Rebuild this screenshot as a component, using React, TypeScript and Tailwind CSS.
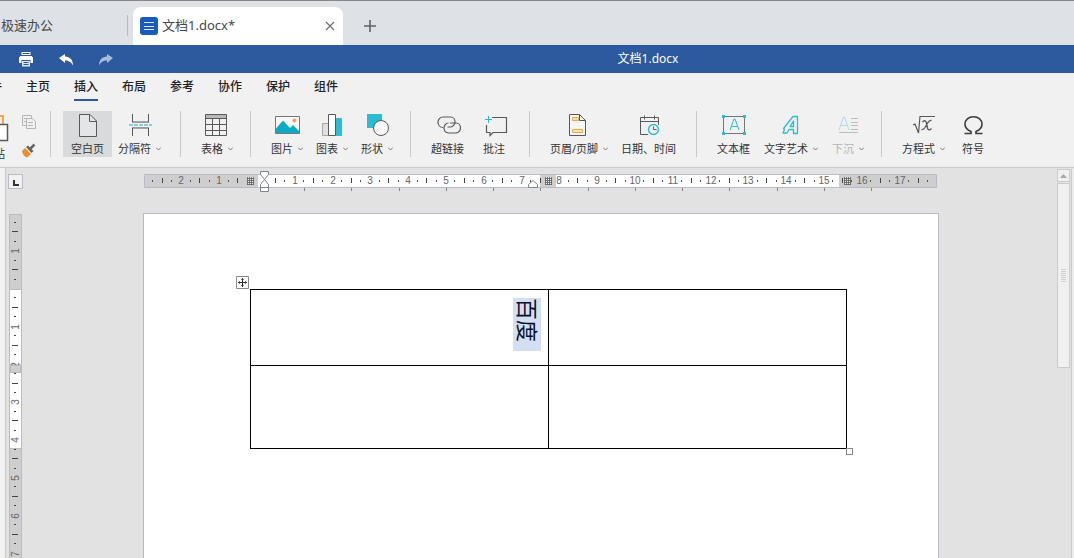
import React, { ReactNode } from 'react';
import clsx from 'clsx';

const CM = 37.8;
const INK = '#595959';
const CYAN = '#2bbdd4';
const ORANGE = '#f5a54a';

const Icon = ({ children }: { children: ReactNode }) => (
  <svg width="28" height="27" viewBox="0 0 28 27" fill="none" stroke={INK} className="shrink-0">
    {children}
  </svg>
);

const BlankPageIcon = () => (
  <Icon>
    <path d="M5.500 1.500H16l6.500 6.500V23.500h-17z" fill="#e4e5e6" />
    <path d="M15.500 1.500v7h7" />
  </Icon>
);

const BreakIcon = () => (
  <Icon>
    <path d="M6.500 1v8h16V1M6.500 23v-8h16v8" />
    <path d="M6 9.500h17M6 14.500h17" stroke="#9a9a9a" />
    <path d="M3 12h23" stroke="#7fd3de" strokeWidth="2" strokeDasharray="4 1" />
  </Icon>
);

const TableIcon = () => (
  <Icon>
    <path d="M3 2h21v4H3z" fill="#b9b9bb" stroke="none" />
    <path d="M2.500 1.500h21v21h-21zM2.500 5.500h21M2.500 11.500h21M2.500 17.500h21M9.500 5.500v17M16.500 5.500v17" />
  </Icon>
);

const PictureIcon = () => (
  <Icon>
    <path d="M2.500 3.500h24v17h-24z" fill="#f7f7f7" stroke="#777" />
    <path d="M3 15.500l7-8 7 7.500 3-3 6 6V20H3z" fill="#0aacc4" stroke="none" />
    <circle cx="21.500" cy="7.500" r="2" fill={ORANGE} stroke="none" />
  </Icon>
);

const ChartIcon = () => (
  <Icon>
    <path d="M4.500 10.500h6v12h-6z" fill="#e0e0e0" stroke="#a5a5a5" />
    <path d="M17.500 5.500h6v17h-6z" fill="#2bbdd4" stroke={CYAN} />
    <path d="M10.500 1.500h7v21h-7z" fill="#fff" />
  </Icon>
);

const ShapesIcon = () => (
  <Icon>
    <path d="M4 1h15v14H4z" fill="#2bbdd4" stroke="none" />
    <circle cx="18" cy="15" r="7.500" fill="#f7f7f7" />
  </Icon>
);

const LinkIcon = () => (
  <Icon>
    <g strokeWidth="1.200">
      <path d="M9 14.500C6 14.500 4 12 4 9.200 4 6.500 6 4 9 4h7.500c3 0 4.500 2.500 4.500 5s-2 5-4.500 5h-3" />
      <path d="M16 10h6c3 0 4.500 2.500 4.500 5s-2 5-4.500 5h-7.500C11.500 20 10 17.500 10 15s1.800-5 4.500-5" />
    </g>
  </Icon>
);

const CommentIcon = () => (
  <Icon>
    <path d="M12 4.500h14.500v15H13l-3 3v-3H6.500V12" strokeWidth="1.200" />
    <path d="M8.500 3v7M5 6.500h7" stroke={CYAN} />
  </Icon>
);

const HeaderIcon = () => (
  <Icon>
    <path d="M4.500 1.500h10l6 6v15h-16z" fill="#f7f7f7" />
    <path d="M14.500 1.500v6h6" />
    <path d="M7.500 4.500h6v3h-6zM7.500 16.500h10v3h-10z" fill="#ffe3ae" stroke={ORANGE} />
  </Icon>
);

const DateIcon = () => (
  <Icon>
    <path d="M13 21.500H5.500v-17h18V12M5.500 8.500h18M9.500 2.500v4M19.500 2.500v4" />
    <circle cx="18.500" cy="16.500" r="5" stroke={CYAN} strokeWidth="1.400" />
    <path d="M18.500 13.500v3h3" />
  </Icon>
);

const TextBoxIcon = () => (
  <Icon>
    <path d="M3.500 3.500h21v17h-21z" stroke="#777" />
    <path d="M10 17l4-11h1l4 11M11.500 13.500h6" stroke={CYAN} />
    <path d="M2 2h3v3H2zM23 2h3v3h-3zM2 19h3v3H2zM23 19h3v3h-3z" fill={CYAN} stroke="none" />
  </Icon>
);

const WordArtIcon = () => (
  <Icon>
    <path
      d="M16 3.500h4.500v17h-4v-4h-4.500L10 20H6l1.500-3.500-1-1zM16.500 8l-3.500 5.500h3.500z"
      stroke={CYAN}
      strokeWidth="1.300"
      strokeLinejoin="round"
    />
  </Icon>
);

const DropCapIcon = () => (
  <Icon>
    <path d="M5 17L9.500 4h1L15 17M6.500 12.500h7" stroke="#a5dfe8" />
    <path d="M17 5.500h7M17 9.500h7M17 12.500h7M17 16.500h7M5 19.500h19" stroke="#bdbdbd" />
  </Icon>
);

const EquationIcon = () => (
  <Icon>
    <path d="M3 12l2-1 3.500 9L10 3.500h15" strokeWidth="1.200" />
    <path
      d="M12.500 9c2-2 3.500-1.500 4 1l1 5c.5 2.500 2 2.500 4 .5M21.500 7.500c-2-.5-3 1-4.500 3.500l-2 3.500c-1 1.500-1.700 2.500-3.500 2"
      strokeWidth="1.300"
    />
  </Icon>
);

const OmegaIcon = () => (
  <Icon>
    <path
      d="M5.500 20.500h6.500v-2C8.500 17 6 14.500 6 11c0-4 3.500-7.300 8.500-7.300S23 7 23 11c0 3.500-2.500 6-6 7.500v2h6.500"
      stroke="#3c3c3c"
      strokeWidth="1.600"
    />
  </Icon>
);

const Chevron = () => (
  <svg width="5" height="4" viewBox="0 0 5 4" fill="none" stroke="#7a7a7a">
    <path d="M0 .500l2.500 2.500L5 .500" />
  </svg>
);

interface ToolProps {
  icon: ReactNode;
  label: string;
  menu?: boolean;
  active?: boolean;
  disabled?: boolean;
}

const Tool = ({ icon, label, menu, active, disabled }: ToolProps) => (
  <button
    disabled={disabled}
    className={clsx(
      'flex h-[46px] flex-col items-center pt-0.5',
      active ? 'bg-[#d8dadc] px-2' : 'px-1.5',
      disabled ? 'text-[#b5b5b5]' : 'text-[#333]',
    )}
  >
    {icon}
    <span className="flex items-center gap-[5px] text-[11px] leading-[18px] whitespace-nowrap">
      {label}
      {menu && <Chevron />}
    </span>
  </button>
);

const Group = ({ className, children }: { className: string; children: ReactNode }) => (
  <div className={clsx('flex h-[46px] shrink-0 border-l border-[#c9c9c9]', className)}>{children}</div>
);

const TabStrip = () => (
  <div className="flex h-[45px] shrink-0 items-end border-t border-[#88888c] bg-[#dee1e6] text-[13px] text-[#45484c]">
    <a href="#home" className="flex h-[38px] w-[127px] items-center pl-px">
      极速办公
    </a>
    <div className="mb-[9px] h-[21px] w-px bg-[#b9bcc1]" />
    <div className="ml-[5px] flex h-[38px] w-[210px] items-center rounded-t-lg bg-white px-[7px]">
      <svg width="18" height="18" viewBox="0 0 18 18" stroke="#dfe9f8">
        <rect width="18" height="18" rx="3" fill="#185abd" stroke="none" />
        <path d="M4 5.500h10M4 9.500h10M4 12.500h10" />
      </svg>
      <span className="ml-1 flex-1">文档1.docx*</span>
      <button aria-label="关闭" className="mr-px">
        <svg width="10" height="10" viewBox="0 0 10 10" stroke="#707070" strokeWidth="1.200">
          <path d="M1 1l8 8M9 1l-8 8" />
        </svg>
      </button>
    </div>
    <button aria-label="新建" className="ml-[21px] flex h-[38px] items-center">
      <svg width="12" height="12" viewBox="0 0 12 12" stroke="#5f6368" strokeWidth="1.600">
        <path d="M6 0v12M0 6h12" />
      </svg>
    </button>
  </div>
);

const TitleBar = () => (
  <div className="flex h-7 shrink-0 items-center bg-[#2d5a9e] text-white">
    <div className="flex w-[222px] shrink-0 gap-[25px] pl-[19px]">
      <button aria-label="打印">
        <svg width="15" height="15" viewBox="0 0 15 15" fill="#fff">
          <path d="M2.500 0h9v3h-9zM1.500 4h11L14 5.500V11h-2.500V8h-9v3H0V5.500z" />
          <path d="M3 9h8v5.500H3z" fill="#dce6f5" />
          <path d="M4.500 10.500h5M4.500 12.500h5M3.500 1.500h7" stroke="#2d5a9e" />
        </svg>
      </button>
      <button aria-label="撤销">
        <svg width="15" height="15" viewBox="0 0 15 15" fill="#fff">
          <path d="M0 6L6 2v2.500c5 0 8 3.500 8 9C12 10 10 8.500 6 8.500V11z" />
        </svg>
      </button>
      <button aria-label="恢复">
        <svg width="15" height="15" viewBox="0 0 15 15" fill="#a9bcd9">
          <path d="M14 6L8 2v2.500c-5 0-8 3.500-8 9C2 10 4 8.500 8 8.500V11z" />
        </svg>
      </button>
    </div>
    <h1 className="flex-1 text-center text-xs">文档1.docx</h1>
  </div>
);

const MENUS = ['主页', '插入', '布局', '参考', '协作', '保护', '组件'];

const MenuBar = () => (
  <nav className="flex h-7 shrink-0 text-xs font-medium text-[#222]">
    <button className="flex w-[14px] justify-end overflow-hidden pr-3 whitespace-nowrap">
      <span className="leading-7">文件</span>
    </button>
    {MENUS.map((name) => (
      <button key={name} className="px-3">
        <span
          className={clsx(
            'block h-7 border-b-2 leading-7',
            name === '插入' ? 'border-[#2d5a9e]' : 'border-transparent',
          )}
        >
          {name}
        </span>
      </button>
    ))}
  </nav>
);

const Ribbon = () => (
  <div className="flex h-[67px] shrink-0 overflow-hidden border-b border-[#cbcbcb] pt-[10px]">
    <button className="flex h-[50px] w-[9px] shrink-0 flex-col items-end overflow-hidden text-[11px] text-[#333]">
      <svg width="30" height="31" viewBox="0 0 30 31" fill="none" className="shrink-0">
        <path d="M8 5h16V14" stroke={ORANGE} strokeWidth="2" />
        <path d="M13.500 13.500h15v16h-15z" fill="#fff" stroke={INK} strokeWidth="1.500" />
      </svg>
      <span className="pr-1 leading-6 whitespace-nowrap">粘贴</span>
    </button>
    <div className="flex w-[41px] shrink-0 flex-col gap-[13px] pt-1 pl-[13px]">
      <button aria-label="复制">
        <svg width="16" height="15" viewBox="0 0 16 15" fill="#f0f0f0" stroke="#b5b5b5">
          <path d="M.5 .500h9v10h-9zM2 3.500h3M2 6.500h3" />
          <path d="M4.500 3.500h6l3 3v7h-9zM6 7.500h5M6 10.500h5" />
        </svg>
      </button>
      <button aria-label="格式刷">
        <svg width="16" height="15" viewBox="0 0 16 15">
          <path d="M0 8l3-3 6 6-4 3.500C2.500 14 .5 11 0 8z" fill="#f08c32" />
          <path d="M4 4l2-1.500 5.500 5.500-2 2z" fill="#666" />
          <path d="M8 6l4.500-4.500" stroke="#666" strokeWidth="2.500" />
        </svg>
      </button>
    </div>
    <Group className="pr-[13px] pl-3">
      <Tool icon={<BlankPageIcon />} label="空白页" active />
      <Tool icon={<BreakIcon />} label="分隔符" menu />
    </Group>
    <Group className="pr-[11px] pl-[14px]">
      <Tool icon={<TableIcon />} label="表格" menu />
    </Group>
    <Group className="gap-px pr-[11px] pl-[14px]">
      <Tool icon={<PictureIcon />} label="图片" menu />
      <Tool icon={<ChartIcon />} label="图表" menu />
      <Tool icon={<ShapesIcon />} label="形状" menu />
    </Group>
    <Group className="gap-1 pr-[15px] pl-[14px]">
      <Tool icon={<LinkIcon />} label="超链接" />
      <Tool icon={<CommentIcon />} label="批注" />
    </Group>
    <Group className="gap-px pr-[14px] pl-[14px]">
      <Tool icon={<HeaderIcon />} label="页眉/页脚" menu />
      <Tool icon={<DateIcon />} label="日期、时间" />
    </Group>
    <Group className="gap-0.5 pr-[11px] pl-[14px]">
      <Tool icon={<TextBoxIcon />} label="文本框" />
      <Tool icon={<WordArtIcon />} label="文字艺术" menu />
      <Tool icon={<DropCapIcon />} label="下沉" menu disabled />
    </Group>
    <Group className="gap-0.5 pl-[14px]">
      <Tool icon={<EquationIcon />} label="方程式" menu />
      <Tool icon={<OmegaIcon />} label="符号" />
    </Group>
  </div>
);

// quarter-centimetre marks: every 4th is a number, even ones are long ticks, odd ones dots
const marks = (from: number, to: number) =>
  Array.from({ length: to - from + 1 }, (_, i) => from + i).filter((q) => q !== 0);

const GridMark = ({ x }: { x: number }) => (
  <g>
    <path d={`M${x} 3h7v8h-7z`} fill="#e8e8e8" />
    <path
      d={`M${x + 0.5} 3v8m2 -8v8m2 -8v8m2 -8v8M${x} 4.500h7m-7 2h7m-7 2h7m-7 2h7`}
      stroke="#5a5a5a"
      strokeWidth=".8"
    />
  </g>
);

const HorizontalRuler = () => {
  const zero = 113;
  return (
    <svg width="794" height="20" viewBox="0 0 794 20" className="ml-px overflow-visible" fill="#666">
      <path d="M.5 .5h792v13H.500z" fill="#cecece" stroke="#b8bcc4" />
      <path d="M114 1h282v12H114zM412 1h283v12H412z" fill="#fff" />
      {marks(-11, 71).map((q) => {
        const x = Math.round(zero + (q * CM) / 4);
        if (q % 4 === 0) {
          return (
            <text key={q} x={x} y="10" textAnchor="middle" className="font-[Liberation_Sans] text-[10px]">
              {Math.abs(q / 4)}
            </text>
          );
        }
        return q % 2 === 0 ? (
          <rect key={q} x={x - 1} y="4" width="1" height="5" fill="#444" />
        ) : (
          <rect key={q} x={x - 1} y="6" width="1" height="2" fill="#555" />
        );
      })}
      <path d="M397 1h14v12h-14z" fill="#cecece" />
      <GridMark x={103} />
      <GridMark x={401} />
      <GridMark x={700} />
      {Array.from({ length: 13 }, (_, i) => (
        <rect key={i} x={Math.round(160 + i * 47.25)} y="14" width="1" height="3" fill="#7d8590" />
      ))}
      <g fill="#fff" stroke="#7d8590">
        <path d="M116.500 -2.500h8v3l-4 5 4 5v3h-8v-3l4 -5 -4 -5z" />
        <path d="M116.500 13.500h8v4h-8z" />
        <path d="M384.500 13.500v-3l4.500 -4 4.500 4v3z" />
      </g>
    </svg>
  );
};

const VerticalRuler = () => {
  const zero = 75;
  return (
    <svg width="13" height="100%" className="block" fill="#666">
      <rect x=".5" y=".5" width="12" height="1200" fill="#cecece" stroke="#b8bcc4" />
      <path d="M1 76h11v74H1zM1 159h11v75H1z" fill="#fff" />
      <path d="M1 75.500h11M1 234.500h11" stroke="#b8bcc4" />
      {marks(-7, 28).map((q) => {
        const y = Math.round(zero + (q * CM) / 4);
        if (q % 4 === 0) {
          return (
            <text
              key={q}
              transform={`translate(10 ${y}) rotate(-90)`}
              textAnchor="middle"
              className="font-[Liberation_Sans] text-[10px]"
            >
              {Math.abs(q / 4)}
            </text>
          );
        }
        return q % 2 === 0 ? (
          <rect key={q} x="3" y={y - 1} width="6" height="1" fill="#444" />
        ) : (
          <rect key={q} x="5" y={y - 1} width="2" height="1" fill="#444" />
        );
      })}
      <path d="M1.500 151.500h10v7h-10z" fill="#cecece" stroke="#b8bcc4" />
    </svg>
  );
};

const Document = () => (
  <article className="mt-[19px] flex-1 border border-b-0 border-[#b8bcc4] bg-white pt-[75px] pr-[91px] pl-[106px]">
    <div className="relative">
      <table className="w-full table-fixed border-collapse text-black">
        <tbody>
          <tr className="h-[76px]">
            <td className="border border-black p-0 align-top">
              <div className="flex justify-end pt-2 pr-[7px]">
                <p className="h-[53px] w-7 bg-[#d5dff3] text-[22px] leading-[26px] text-[#0b1226] [text-orientation:sideways] [writing-mode:vertical-rl]">
                  百度
                </p>
              </div>
            </td>
            <td className="border border-black" />
          </tr>
          <tr className="h-[83px]">
            <td className="border border-black" />
            <td className="border border-black" />
          </tr>
        </tbody>
      </table>
      <svg width="13" height="13" viewBox="0 0 13 13" className="absolute -top-[13px] -left-[14px]" fill="none">
        <path d="M.5 .5h12v12H.500z" fill="#fff" stroke="#8a8a8a" />
        <path d="M6.500 2v9M2 6.500h9" stroke="#333" />
        <path d="M5 4l1.500 -2L8 4zM5 9l1.500 2L8 9zM4 5L2 6.500 4 8zM9 5l2 1.500L9 8z" fill="#333" />
      </svg>
      <div className="absolute -right-[6px] -bottom-[6px] size-[7px] border border-[#8a8a8a] bg-white" />
    </div>
  </article>
);

const Scrollbar = () => (
  <div className="flex w-[17px] shrink-0 flex-col pt-px">
    <div className="flex flex-1 flex-col border-r-2 border-[#ececec]">
      <div className="flex flex-1 flex-col gap-px border-r border-[#cbcbcb] pr-px">
        <button
          aria-label="向上滚动"
          className="flex h-[13px] w-[13px] items-center justify-center border border-[#cbcbcb] bg-[#f0f0f0]"
        >
          <svg width="7" height="4" viewBox="0 0 7 4" fill="#a8a8a8">
            <path d="M0 4l3.500 -4L7 4z" />
          </svg>
        </button>
        <div className="flex h-[185px] w-[13px] items-center justify-center border border-[#cbcbcb] bg-[#f0f0f0]">
          <svg width="5" height="13" viewBox="0 0 5 13" stroke="#cfcfcf">
            <path d="M0 .500h5M0 2.500h5M0 4.500h5M0 6.500h5M0 8.500h5M0 10.500h5M0 12.500h5" />
          </svg>
        </div>
      </div>
    </div>
  </div>
);

export default function App() {
  return (
    <div className="flex h-screen flex-col overflow-hidden bg-[#f1f1f1] font-['Noto_Sans','Noto_Sans_CJK_SC',sans-serif]">
      <TabStrip />
      <TitleBar />
      <MenuBar />
      <Ribbon />
      <main className="flex min-h-0 flex-1 bg-[#e2e2e2]">
        <div className="w-[6px] shrink-0 border-r border-[#cbcbcb] bg-[#f1f1f1]" />
        <div className="flex w-[19px] shrink-0 flex-col gap-[25px] pt-[6px] pl-0.5">
          <button aria-label="制表符" className="size-[15px] shrink-0 border border-[#b8bcc4] bg-[#f1f1f1]">
            <svg width="13" height="13" viewBox="0 0 13 13" stroke="#333" strokeWidth="2" fill="none">
              <path d="M5 5v5h5" />
            </svg>
          </button>
          <div className="min-h-0 flex-1 overflow-hidden pl-px">
            <VerticalRuler />
          </div>
        </div>
        <div className="flex min-w-0 flex-1 justify-center">
          <div className="flex w-full max-w-[796px] flex-col pt-[6px]">
            <HorizontalRuler />
            <Document />
          </div>
        </div>
        <Scrollbar />
      </main>
    </div>
  );
}
